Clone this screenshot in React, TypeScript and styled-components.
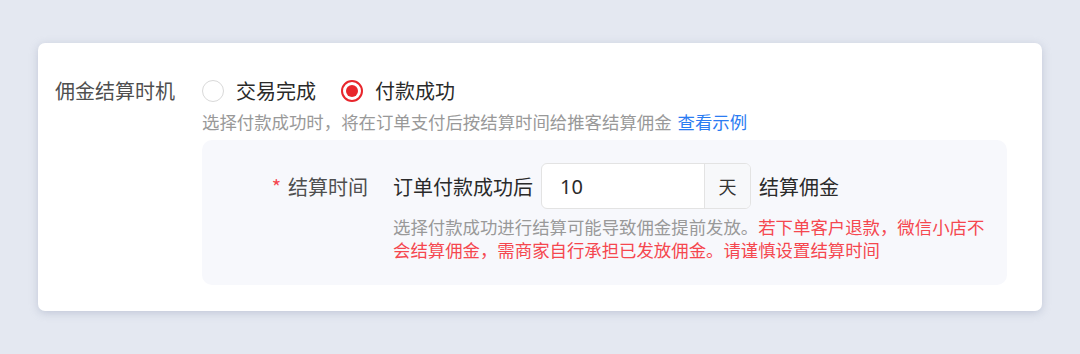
import React, { useState } from "react";
import styled, { createGlobalStyle } from "styled-components";

const GlobalStyle = createGlobalStyle`
  html, body {
    margin: 0;
    padding: 0;
    background: #e4e8f1;
    font-family: "Noto Sans CJK SC", "Noto Sans", sans-serif;
  }
`;

const Page = styled.div`
  width: 1080px;
  height: 354px;
  padding: 43px 38px 0 38px;
  box-sizing: border-box;
`;

const Card = styled.div`
  width: 1004px;
  height: 268px;
  box-sizing: border-box;
  background: #ffffff;
  border-radius: 7px;
  box-shadow: 0 2px 8px rgba(150, 160, 185, 0.45);
  padding: 34px 35px 0 17px;
  display: grid;
  grid-template-columns: 147px 1fr;
`;

const FieldLabel = styled.div`
  font-size: 20px;
  line-height: 28px;
  color: #4f4f4f;
`;

const FieldBody = styled.div`
  display: flex;
  flex-direction: column;
`;

const RadioGroup = styled.div`
  display: flex;
  align-items: center;
  gap: 25px;
  height: 28px;
`;

const RadioItem = styled.label`
  display: flex;
  align-items: center;
  gap: 12px;
  font-size: 20px;
  line-height: 28px;
  color: #2a2a2a;
  cursor: pointer;
`;

const RadioCircle = styled.span<{ $checked: boolean }>`
  width: 22px;
  height: 22px;
  box-sizing: border-box;
  border-radius: 50%;
  border: ${(p) => (p.$checked ? "2px solid #e8262c" : "1.5px solid #d9d9d9")};
  display: flex;
  align-items: center;
  justify-content: center;
  background: #fff;
  &::after {
    content: "";
    width: 12px;
    height: 12px;
    border-radius: 50%;
    background: #e8262c;
    display: ${(p) => (p.$checked ? "block" : "none")};
  }
`;

const Hint = styled.div`
  margin-top: 5px;
  font-size: 17.4px;
  line-height: 23px;
  color: #999999;
`;

const Link = styled.a`
  color: #2b7cf2;
  text-decoration: none;
  margin-left: 6px;
`;

const Panel = styled.div`
  margin-top: 7px;
  width: 805px;
  box-sizing: border-box;
  background: #f7f8fc;
  border-radius: 10px;
  padding: 23px 20px 23px 0;
  display: grid;
  grid-template-columns: 166px 1fr;
  column-gap: 25px;
`;

const SubLabel = styled.div`
  height: 46px;
  display: flex;
  align-items: center;
  justify-content: flex-end;
  font-size: 20px;
  color: #4f4f4f;
`;

const Required = styled.span`
  color: #f5474f;
  margin-right: 7px;
  font-size: 20px;
`;

const InputRow = styled.div`
  display: flex;
  align-items: center;
  gap: 8px;
  font-size: 20px;
  color: #2a2a2a;
  height: 46px;
`;

const InputGroup = styled.div`
  display: flex;
  height: 46px;
  box-sizing: border-box;
  border: 1px solid #e3e3e3;
  border-radius: 6px;
  background: #fff;
  overflow: hidden;
`;

const NumberInput = styled.input`
  width: 162px;
  border: none;
  outline: none;
  padding: 0 0 0 18px;
  box-sizing: border-box;
  font-size: 20px;
  font-family: "Noto Sans", "Noto Sans CJK SC", sans-serif;
  color: #2a2a2a;
  background: transparent;
`;

const Addon = styled.div`
  width: 45px;
  border-left: 1px solid #e3e3e3;
  background: #f7f8fa;
  display: flex;
  align-items: center;
  justify-content: center;
  font-size: 18px;
  color: #333;
`;

const Warning = styled.p`
  grid-column: 2;
  margin: 6px 0 0 0;
  width: 600px;
  font-size: 17.4px;
  line-height: 23.3px;
  color: #999999;
`;

const Danger = styled.span`
  color: #f5474f;
`;

export default function App() {
  const [value, setValue] = useState<"done" | "paid">("paid");
  const [days, setDays] = useState("10");
  return (
    <>
      <GlobalStyle />
      <Page>
        <Card>
          <FieldLabel>佣金结算时机</FieldLabel>
          <FieldBody>
            <RadioGroup>
              <RadioItem onClick={() => setValue("done")}>
                <RadioCircle $checked={value === "done"} />
                交易完成
              </RadioItem>
              <RadioItem onClick={() => setValue("paid")}>
                <RadioCircle $checked={value === "paid"} />
                付款成功
              </RadioItem>
            </RadioGroup>
            <Hint>
              选择付款成功时，将在订单支付后按结算时间给推客结算佣金
              <Link href="#">查看示例</Link>
            </Hint>
            <Panel>
              <SubLabel>
                <Required>*</Required>结算时间
              </SubLabel>
              <InputRow>
                订单付款成功后
                <InputGroup>
                  <NumberInput value={days} onChange={(e) => setDays(e.target.value)} />
                  <Addon>天</Addon>
                </InputGroup>
                结算佣金
              </InputRow>
              <Warning>
                选择付款成功进行结算可能导致佣金提前发放。<Danger>若下单客户退款，微信小店不会结算佣金，需商家自行承担已发放佣金。请谨慎设置结算时间</Danger>
              </Warning>
            </Panel>
          </FieldBody>
        </Card>
      </Page>
    </>
  );
}
